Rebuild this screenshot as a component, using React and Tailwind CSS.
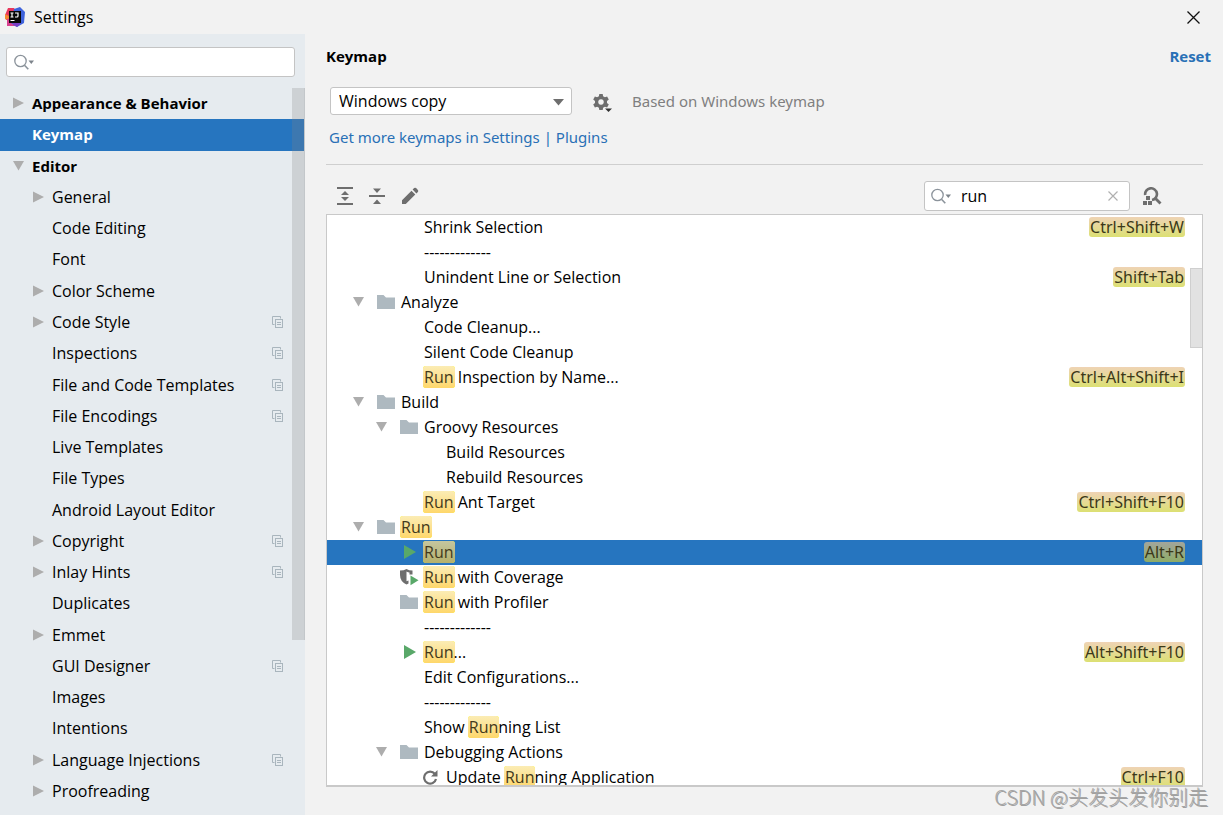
import React, { useState } from 'react';

const sections = [
  { label: 'Appearance & Behavior', arrow: 'right', top: true },
  { label: 'Keymap', top: true, selected: true },
  { label: 'Editor', arrow: 'down', top: true },
  { label: 'General', arrow: 'right' },
  { label: 'Code Editing' },
  { label: 'Font' },
  { label: 'Color Scheme', arrow: 'right' },
  { label: 'Code Style', arrow: 'right', project: true },
  { label: 'Inspections', project: true },
  { label: 'File and Code Templates', project: true },
  { label: 'File Encodings', project: true },
  { label: 'Live Templates' },
  { label: 'File Types' },
  { label: 'Android Layout Editor' },
  { label: 'Copyright', arrow: 'right', project: true },
  { label: 'Inlay Hints', arrow: 'right', project: true },
  { label: 'Duplicates' },
  { label: 'Emmet', arrow: 'right' },
  { label: 'GUI Designer', project: true },
  { label: 'Images' },
  { label: 'Intentions' },
  { label: 'Language Injections', arrow: 'right', project: true },
  { label: 'Proofreading', arrow: 'right' },
];

const actions = [
  { label: 'Shrink Selection', depth: 1, keys: 'Ctrl+Shift+W' },
  { label: '-------------', depth: 1 },
  { label: 'Unindent Line or Selection', depth: 1, keys: 'Shift+Tab' },
  { label: 'Analyze', depth: 0, icon: 'folder', open: true },
  { label: 'Code Cleanup...', depth: 1 },
  { label: 'Silent Code Cleanup', depth: 1 },
  { label: 'Run Inspection by Name...', depth: 1, keys: 'Ctrl+Alt+Shift+I' },
  { label: 'Build', depth: 0, icon: 'folder', open: true },
  { label: 'Groovy Resources', depth: 1, icon: 'folder', open: true },
  { label: 'Build Resources', depth: 2 },
  { label: 'Rebuild Resources', depth: 2 },
  { label: 'Run Ant Target', depth: 1, keys: 'Ctrl+Shift+F10' },
  { label: 'Run', depth: 0, icon: 'folder', open: true },
  { label: 'Run', depth: 1, icon: 'play', keys: 'Alt+R', selected: true },
  { label: 'Run with Coverage', depth: 1, icon: 'coverage' },
  { label: 'Run with Profiler', depth: 1, icon: 'folder' },
  { label: '-------------', depth: 1 },
  { label: 'Run...', depth: 1, icon: 'play', keys: 'Alt+Shift+F10' },
  { label: 'Edit Configurations...', depth: 1 },
  { label: '-------------', depth: 1 },
  { label: 'Show Running List', depth: 1 },
  { label: 'Debugging Actions', depth: 1, icon: 'folder', open: true },
  { label: 'Update Running Application', depth: 2, icon: 'update', keys: 'Ctrl+F10' },
];

const indents = ['pl-[26px]', 'pl-[49px]', 'pl-[71px]'];

function Arrow({ direction }) {
  return (
    <svg width="11" height="12" viewBox="0 0 11 12" fill="#adadad" aria-hidden="true">
      {direction === 'down' ? <path d="M0 1h11L5.5 10.5z" /> : <path d="M0 0.5v11L11 6z" />}
    </svg>
  );
}

function Logo() {
  return (
    <svg width="20" height="20" viewBox="0 0 20 20" aria-hidden="true">
      <path d="M0 8l3-7 6 0 3 4-4 8-7 0z" fill="#e8365c" />
      <path d="M0 7l4 2 1 5-5-2z" fill="#f58a32" />
      <path d="M2 12l4-1 4 8-8 0z" fill="#d8408f" />
      <path d="M9 2l6-2 5 5-1 11-7 4-6-4z" fill="#3f63dc" />
      <path d="M8 16h8l-4 4-4-2z" fill="#7a3fc4" />
      <rect x="4" y="4" width="12" height="12" fill="#080808" />
      <path d="M5.5 6h3M7 6v4M5.5 10h3M10 6h3v3q0 1-1 1h-2" fill="none" stroke="#fff" strokeWidth="1.2" />
      <path d="M5.500 13.500h4" stroke="#fff" strokeWidth="1" />
    </svg>
  );
}

function SearchIcon() {
  return (
    <svg width="21" height="17" viewBox="0 0 21 17" fill="none" aria-hidden="true">
      <circle cx="6.500" cy="7" r="5.700" stroke="#8b939b" strokeWidth="1.300" />
      <path d="M10.500 11.200l3.800 4" stroke="#8b939b" strokeWidth="1.600" />
      <path d="M14.500 6.500h5.500l-2.700 3.500z" fill="#7d848b" />
    </svg>
  );
}

function ProjectIcon() {
  return (
    <svg width="12" height="12" viewBox="0 0 12 12" fill="none" stroke="#a9b5bd" aria-hidden="true">
      <path d="M2.500 8.500H0.500V0.500H8.500V2.500" />
      <rect x="3.500" y="3.500" width="7" height="8" />
      <path d="M5 6.500h4M5 8.500h4" />
    </svg>
  );
}

function ActionIcon({ name }) {
  if (name === 'folder') {
    return (
      <svg width="18" height="14" viewBox="0 0 18 14" aria-hidden="true">
        <path d="M0 0h6.500l2.500 2.500H18V14H0z" fill="#aeb9c0" />
      </svg>
    );
  }
  if (name === 'play') {
    return (
      <svg width="18" height="16" viewBox="0 0 18 16" aria-hidden="true">
        <path d="M4 1l12 7-12 7z" fill="#59a869" />
      </svg>
    );
  }
  if (name === 'coverage') {
    return (
      <svg width="19" height="18" viewBox="0 0 19 18" aria-hidden="true">
        <path
          d="M0 2.500Q4 2.500 6.500 1 9 2.500 12.500 2.500V6.500h-3V4.500Q8 4.300 6.500 3.500V13.200L8.500 12.500V15.500L6.500 16.500Q0 13.500 0 7z"
          fill="#6e6e6e"
        />
        <path d="M10.500 7.500l8 4.800-8 5z" fill="#59a869" />
      </svg>
    );
  }
  if (name === 'update') {
    return (
      <svg width="17" height="17" viewBox="0 0 17 17" fill="none" aria-hidden="true">
        <path d="M12.800 4.800A6 6 0 1 0 14 10" stroke="#6e6e6e" strokeWidth="2.200" />
        <path d="M15.500 1v6.500H9z" fill="#6e6e6e" />
      </svg>
    );
  }
  return null;
}

function Highlighted({ text, query, selected }) {
  if (!query) return text;
  const start = text.toLowerCase().indexOf(query.toLowerCase());
  if (start < 0) return text;
  const end = start + query.length;
  return (
    <>
      {text.slice(0, start)}
      <mark
        className={`-mx-px rounded-[3px] bg-linear-to-b px-px text-[#43391c] ${
          selected ? 'from-[#c5c69f] to-[#b5b06b]' : 'from-[#fbecb4] to-[#fed76a]'
        }`}
      >
        {text.slice(start, end)}
      </mark>
      {text.slice(end)}
    </>
  );
}

function Sidebar() {
  const [filter, setFilter] = useState('');

  return (
    <aside className="relative flex w-[305px] shrink-0 flex-col bg-[#e6ebef] pt-[13px] pb-2">
      <label className="mr-[10px] ml-[6px] flex h-[30px] shrink-0 items-center rounded-[3px] border border-[#c4c4c4] bg-white pl-[7px]">
        <SearchIcon />
        <input
          type="text"
          aria-label="Search settings"
          value={filter}
          onChange={(e) => setFilter(e.target.value)}
          className="min-w-0 flex-1 bg-transparent px-2 outline-none"
        />
      </label>
      <ul className="mt-[11px] flex min-h-0 flex-1 flex-col">
        {sections.map((item) => (
          <li key={item.label} className="flex min-h-0 flex-1">
            <button
              type="button"
              className={`flex w-full items-center pr-[21px] pb-px text-left ${
                item.top ? 'pl-[13px] text-[15px] font-bold' : 'pl-[33px]'
              } ${item.selected ? 'bg-[#2675bf] text-white' : ''}`}
            >
              <span className="w-[19px] shrink-0">
                {item.arrow && <Arrow direction={item.arrow} />}
              </span>
              <span className="flex-1">{item.label}</span>
              {item.project && <ProjectIcon />}
            </button>
          </li>
        ))}
      </ul>
      <div className="absolute top-[54px] right-0 h-[552px] w-[13px] border-r border-[#c3c7ca] bg-[#82828240]" />
    </aside>
  );
}

function Toolbar({ query, setQuery }) {
  return (
    <div className="flex h-[30px] items-center pl-[11px] text-[#6e6e6e]">
      <button type="button" aria-label="Expand All">
        <svg width="16" height="18" viewBox="0 0 16 18" fill="currentColor">
          <path d="M0 0h16v2H0zM0 16h16v2H0zM8 4l4 4H4zM8 14l4-4H4z" />
        </svg>
      </button>
      <button type="button" aria-label="Collapse All" className="ml-4">
        <svg width="16" height="18" viewBox="0 0 16 18" fill="currentColor">
          <path d="M0 8h16v2H0zM4 1.500h8l-4 4.500zM4 17h8l-4-4.500z" />
        </svg>
      </button>
      <button type="button" aria-label="Edit Shortcut" className="ml-4">
        <svg width="18" height="18" viewBox="0 0 18 18" fill="currentColor">
          <path d="M1 13.200L10.500 3.700l3.800 3.800L4.800 17H1zM11.600 2.600l1.500-1.500q1-.8 2 0l1.800 1.800q.8 1 0 2l-1.500 1.500z" />
        </svg>
      </button>
      <label className="ml-auto flex h-[30px] w-[206px] items-center rounded-[3px] border border-[#c4c4c4] bg-white pr-[11px] pl-[6px]">
        <SearchIcon />
        <input
          type="text"
          aria-label="Search actions"
          value={query}
          onChange={(e) => setQuery(e.target.value)}
          className="ml-[9px] min-w-0 flex-1 bg-transparent pb-px text-black outline-none"
        />
        <button type="button" aria-label="Clear" onClick={() => setQuery('')}>
          <svg width="10" height="10" viewBox="0 0 10 10" stroke="#b0b0b0" strokeWidth="1.200">
            <path d="M0.500 0.500l9 9M9.500 0.500l-9 9" />
          </svg>
        </button>
      </label>
      <button type="button" aria-label="Find Actions by Shortcut" className="mr-[61px] ml-[12px]">
        <svg width="20" height="18" viewBox="0 0 20 18" fill="none">
          <path d="M3.200 8A5.900 5.900 0 1 1 10 13" stroke="currentColor" strokeWidth="2.600" />
          <path d="M13 11l5.500 5.500" stroke="currentColor" strokeWidth="2.800" />
          <path d="M4 9h4v4H4zM1 14h4v4H1zM6 14h4v4H6z" fill="currentColor" />
        </svg>
      </button>
    </div>
  );
}

function ActionTree({ query }) {
  return (
    <div className="relative mr-5 min-h-0 flex-1 overflow-hidden border border-b-2 border-[#c9c9c9] bg-white">
      <ul role="tree" aria-label="Actions">
        {actions.map((action, index) => (
          <li
            key={index}
            role="treeitem"
            aria-selected={!!action.selected}
            className={`flex h-[25px] items-center pr-[17px] pb-px ${indents[action.depth]} ${
              action.selected ? 'bg-[#2675bf]' : ''
            }`}
          >
            <span className="w-6 shrink-0">{action.open && <Arrow direction="down" />}</span>
            <span className="w-6 shrink-0">
              <ActionIcon name={action.icon} />
            </span>
            <span className="flex-1 whitespace-pre">
              <Highlighted text={action.label} query={query} selected={action.selected} />
            </span>
            {action.keys && (
              <kbd
                className={`rounded-[3px] bg-linear-to-b px-px font-['Noto_Sans',sans-serif] text-[16px] leading-5 text-[#3b3818] ${
                  action.selected ? 'from-[#a2a59c] to-[#8fac66]' : 'from-[#efd3b4] to-[#dce072]'
                }`}
              >
                {action.keys}
              </kbd>
            )}
          </li>
        ))}
      </ul>
      <div className="absolute top-[53px] right-0 h-20 w-3 border border-r-0 border-[#cfcfcf] bg-[#e2e2e2]" />
    </div>
  );
}

function KeymapPage() {
  const [query, setQuery] = useState('run');

  return (
    <main className="flex min-w-0 flex-1 flex-col pb-[28px] pl-[21px]">
      <div className="flex h-[43px] shrink-0 items-center justify-between pr-3 text-[15px] font-bold">
        <h1>Keymap</h1>
        <button type="button" className="text-[#2970b6]">Reset</button>
      </div>
      <div className="mt-[10px] flex h-7 shrink-0 items-center pl-1">
        <div className="relative h-full w-[242px]">
          <select
            aria-label="Keymap scheme"
            className="h-full w-full appearance-none rounded-[3px] border border-[#c4c4c4] bg-white pl-2 outline-none"
          >
            <option>Windows copy</option>
          </select>
          <svg className="pointer-events-none absolute top-[12px] right-2" width="11" height="7" viewBox="0 0 11 7" fill="#6e6e6e">
            <path d="M0 0h11L5.500 6.500z" />
          </svg>
        </div>
        <button type="button" aria-label="Show Scheme Actions" className="ml-[21px] pt-1">
          <svg width="20" height="20" viewBox="0 0 20 20" aria-hidden="true">
            <g transform="translate(8 9)" fill="#6e6e6e">
              <path
                fillRule="evenodd"
                d="M-1.700-8h3.400l.4 2.300 1.800 1 2.200-.8 1.700 2.900-1.800 1.500v2.200l1.800 1.500-1.700 2.900-2.200-.8-1.800 1-.4 2.300h-3.400l-.4-2.300-1.800-1-2.200.8-1.700-2.900 1.800-1.500v-2.200l-1.800-1.500 1.700-2.900 2.200.8 1.800-1zM0-2.800a2.800 2.800 0 1 0 .01 0z"
              />
            </g>
            <path d="M12 15.500h7L15.500 19z" fill="#333" />
          </svg>
        </button>
        <span className="ml-[19px] font-['Noto_Sans',sans-serif] text-[15px] text-[#7f7f7f]">Based on Windows keymap</span>
      </div>
      <div className="mt-[10px] h-6 shrink-0 pl-[3px] font-['Noto_Sans',sans-serif] text-[15px] leading-6">
        <a href="#plugins" className="text-[#2970b6]">Get more keymaps in Settings | Plugins</a>
      </div>
      <hr className="mt-[15px] mr-5 mb-4 border-[#cfcfcf]" />
      <Toolbar query={query} setQuery={setQuery} />
      <div className="mt-[3px] flex min-h-0 flex-1 flex-col">
        <ActionTree query={query} />
      </div>
    </main>
  );
}

export default function App() {
  return (
    <div className="relative flex h-screen flex-col overflow-hidden bg-[#f2f2f2] font-['Open_Sans','Noto_Sans_CJK_SC',sans-serif] text-[16px] leading-5 text-black">
      <header className="flex h-[34px] shrink-0 items-center pr-[23px] pl-[5px]">
        <Logo />
        <span className="ml-[9px]">Settings</span>
        <button type="button" aria-label="Close" className="ml-auto">
          <svg width="13" height="13" viewBox="0 0 13 13" stroke="#111" strokeWidth="1.300">
            <path d="M0.500 0.500l12 12M12.500 0.500l-12 12" />
          </svg>
        </button>
      </header>
      <div className="flex min-h-0 flex-1">
        <Sidebar />
        <KeymapPage />
      </div>
      <p className="absolute right-[15px] bottom-[7px] font-['Noto_Sans_CJK_SC',sans-serif] text-[20px] leading-[22px] font-light text-[#a6a6a6] [text-shadow:1px_1px_0_#a0a0a0]">
        CSDN @头发头发你别走
      </p>
    </div>
  );
}
